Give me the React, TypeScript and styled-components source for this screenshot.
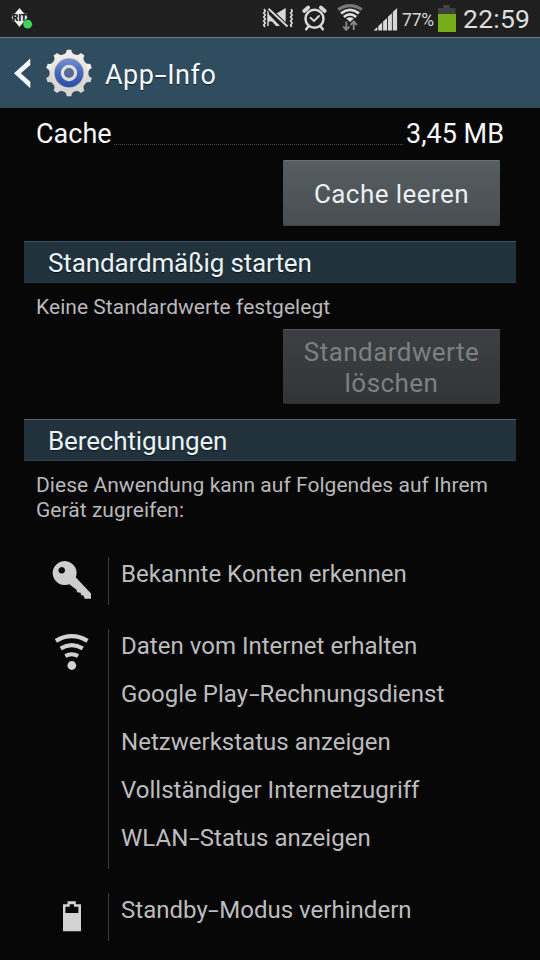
import React from "react";
import styled, { createGlobalStyle } from "styled-components";

const GlobalStyle = createGlobalStyle`
  * { box-sizing: border-box; }
  body { margin: 0; background: #070708; }
`;

const Screen = styled.main`
  width: 540px;
  height: 960px;
  overflow: hidden;
  display: flex;
  flex-direction: column;
  background: #070708;
  color: #f6f6f6;
  font-family: Roboto, "Liberation Sans", sans-serif;
`;

const StatusBar = styled.div`
  height: 37px;
  flex: none;
  display: flex;
  align-items: flex-start;
  justify-content: space-between;
  background: #1f1f1f;
`;

const StatusIcons = styled.div`
  display: flex;
  align-items: flex-start;
`;

const Percent = styled.span`
  width: 37px;
  padding-left: 1px;
  font-size: 17.5px;
  line-height: 40px;
  letter-spacing: -0.2px;
  color: #d6d6d6;
`;

const Clock = styled.span`
  width: 84px;
  padding-left: 7px;
  font-size: 26.5px;
  line-height: 38px;
  letter-spacing: 0.25px;
  color: #dedede;
`;

const ActionBar = styled.header`
  height: 71px;
  flex: none;
  display: flex;
  align-items: center;
  background: #304c5f;
  border-top: 1px solid #6b8292;
`;

const Title = styled.h1`
  margin: 4px 0 0 10px;
  font-size: 27px;
  font-weight: 400;
  letter-spacing: 0.5px;
  color: #f4fafc;
  text-shadow: 0 1px 1px #17252f;
`;

const CacheRow = styled.div`
  height: 52px;
  flex: none;
  display: flex;
  padding: 0 36px;
  font-size: 27px;
  line-height: 53px;
`;

const CacheLabel = styled.span`
  letter-spacing: 0;
`;

const Leader = styled.span`
  flex: 1;
  height: 37px;
  margin: 0 3px 0 2px;
  border-bottom: 1px dotted #4c4c4c;
`;

const Button = styled.button<{ $h: number }>`
  width: 217px;
  height: ${(p) => p.$h}px;
  flex: none;
  align-self: flex-end;
  margin-right: 40px;
  padding: 3px 0 0;
  border: 0;
  border-radius: 2px;
  font: 400 26px/31px Roboto, "Liberation Sans", sans-serif;
  letter-spacing: 0.45px;
  color: #eaf0f4;
  background: linear-gradient(#575e62, #484e51);
  box-shadow: inset 0 1px #6c7376, inset 0 -1px #3c4144;

  &:disabled {
    color: #7c8082;
    background: linear-gradient(#3c4042, #323537);
    box-shadow: inset 0 1px #535759, inset 0 -1px #2b2e30;
  }
`;

const SectionTitle = styled.h2<{ $line: string }>`
  width: 492px;
  height: 42px;
  flex: none;
  margin: 15px 0 0 24px;
  padding-left: 24px;
  font-size: 26px;
  font-weight: 400;
  line-height: 43px;
  letter-spacing: -0.13px;
  color: #ebf3f6;
  text-shadow: 0 1px 1px #0d161c;
  background: #22323d;
  border-top: 1px solid ${(p) => p.$line};
  border-bottom: 1px solid #293b47;
`;

const Note = styled.p<{ $h: number }>`
  height: ${(p) => p.$h}px;
  flex: none;
  margin: 0;
  padding: 12px 40px 0 36px;
  font-size: 21px;
  line-height: 24.5px;
  letter-spacing: 0.04px;
  color: #b9b9b9;
`;

const Permissions = styled.div`
  display: flex;
  flex-direction: column;
  gap: 24px;
`;

const Group = styled.section`
  display: grid;
  grid-template-columns: 108px 1fr;
`;

const GroupIcon = styled.div`
  display: flex;
  height: 48px;
  justify-content: flex-end;
  padding-right: 12px;
`;

const GroupItems = styled.ul`
  margin: 0;
  padding: 0 0 0 12px;
  list-style: none;
  border-left: 1px solid #3e3e3e;
`;

const Permission = styled.li`
  height: 48px;
  font-size: 24px;
  line-height: 34px;
  letter-spacing: 0.02px;
  color: #bdbdbd;
`;

const WideHyphen = styled.span`
  display: inline-block;
  margin: 0 0.1em;
  letter-spacing: 0;
  transform: scaleX(1.6);
`;

const Hyphenated = ({ text }: { text: string }) => (
  <>
    {text.split("-").map((part, i) => (
      <React.Fragment key={i}>
        {i > 0 && <WideHyphen>-</WideHyphen>}
        {part}
      </React.Fragment>
    ))}
  </>
);

const AppBadge = () => (
  <svg width="50" height="37" viewBox="0 0 50 37">
    <path d="M19.5 8 L27.5 17.5 L19.5 27 L11.5 17.5Z" fill="#f2f2f2" />
    <text x="19.7" y="21" textAnchor="middle" fontFamily="Roboto, sans-serif" fontSize="9" fontWeight="900" fill="#141414" stroke="#c9c9c9" strokeWidth="0.5" paintOrder="stroke">RIT</text>
    <circle cx="27.7" cy="24.2" r="4.4" fill="#3fd45a" />
  </svg>
);

const Muted = () => (
  <svg width="42" height="37" viewBox="0 0 42 37" fill="none" stroke="#d8d8d8">
    <path d="M13 9l1.3 2-1.6 2 1.6 2-1.6 2 1.6 2-1.6 2 1.6 2-1.6 2 1.3 2" strokeWidth="1.7" />
    <path d="M17 10.5v15.5" strokeWidth="1.5" />
    <path d="M17 13.5l12 12.5h-4l-4-4.5h-4z" fill="#d8d8d8" stroke="none" />
    <path d="M25 13.8L34.7 8v18L25 18z" fill="#d8d8d8" stroke="none" />
    <path d="M17 8.2L36 26.6" stroke="#1f1f1f" strokeWidth="4.5" />
    <path d="M17.5 8.7L36.5 26.5" strokeWidth="1.9" />
    <path d="M40.2 9l1 2-1.6 2 1.6 2-1.6 2 1.6 2-1.6 2 1.6 2-1.6 2 1 2" strokeWidth="1.7" />
  </svg>
);

const Alarm = () => (
  <svg width="43" height="37" viewBox="0 0 43 37" fill="none" stroke="#d8d8d8" strokeLinecap="round">
    <circle cx="21.5" cy="18.7" r="9" strokeWidth="2.5" />
    <path d="M11.2 11L15.2 7.5M27.8 7.5l4 3.5" strokeWidth="3.7" />
    <path d="M15.5 26.3l-2.3 3M27.5 26.3l2.3 3" strokeWidth="2.5" />
    <path d="M17.5 17.7l3.5 3.3 5-5" strokeWidth="1.9" />
  </svg>
);

const StatusWifi = () => (
  <svg width="37" height="37" viewBox="0 0 37 37" fill="none">
    <path d="M2.2 9.7Q14 1.5 25.8 9.7" stroke="#777" strokeWidth="3.3" />
    <path d="M5 13.3Q14 6.5 23 13.3" stroke="#dedede" strokeWidth="2.8" />
    <path d="M7.8 16.9Q14 12 20.2 16.9" stroke="#dedede" strokeWidth="2.6" />
    <path d="M10.2 18.6Q14 15.8 17.8 18.6L14 22z" fill="#dedede" />
    <path d="M10.3 21.5v8M7.2 26.5l3.1 3.3 3.1-3.3M17.7 30v-8M14.5 25l3.2-3.5 3.2 3.5" stroke="#868686" strokeWidth="1.9" />
  </svg>
);

const Signal = () => (
  <svg width="28" height="37" viewBox="0 0 28 37" fill="#d8d8d8">
    <path d="M0.5 30.5L4.4 27v3.5zM5.3 30.5V26L9.2 22.5v8zM10.1 30.5V21.5l3.9-3.5v12.5zM14.9 30.5V16.7l4-3.5v17.3zM19.8 30.5V12l4.3-4v22.5z" />
  </svg>
);

const StatusBattery = () => (
  <svg width="18" height="37" viewBox="0 0 18 37">
    <path d="M5.5 5h6v3h6v6h-18V8h6z" fill="#3f4040" />
    <path d="M5.5 5h6v2.5h-6z" fill="#4a403d" />
    <path d="M0 14h18v18H0z" fill="#76ad18" />
  </svg>
);

const BackArrow = () => (
  <svg width="43" height="70" viewBox="0 0 43 70">
    <path d="M30.3 20.5v6.6L20.8 35.2l9.5 8.5v6.6L14 35.2z" fill="#f5fafc" />
  </svg>
);

const Gear = () => (
  <svg width="52" height="52" viewBox="-26 -26 52 52">
    <defs>
      <linearGradient id="gearBlue" x1="0" y1="0" x2="0" y2="1">
        <stop offset="0" stopColor="#7590d4" />
        <stop offset="0.5" stopColor="#4568b9" />
        <stop offset="1" stopColor="#294ca8" />
      </linearGradient>
      <linearGradient id="gearBody" x1="0" y1="0" x2="0" y2="1">
        <stop offset="0" stopColor="#f1eeeb" />
        <stop offset="1" stopColor="#d4d1d0" />
      </linearGradient>
    </defs>
    <circle r="19.5" fill="url(#gearBody)" />
    {Array.from({ length: 10 }, (_, i) => (
      <path key={i} d="M-4.8-18.5l2-2.3.5-2.4h4.6l.5 2.4 2 2.3z" fill={i > 2 && i < 8 ? "#d9d6d4" : "#f0edea"} transform={`rotate(${i * 36})`} />
    ))}
    <circle r="15" fill="#bcb8b7" />
    <circle r="14.3" fill="url(#gearBlue)" />
    <circle r="6.6" fill="#566b92" stroke="#e0ddda" strokeWidth="3.2" />
  </svg>
);

const KeyIcon = () => (
  <svg width="48" height="48" viewBox="48 557 48 48">
    <path fillRule="evenodd" fill="#cecece" d="M64.7 561a12 12 0 1 1-.1 0zM61.7 567a3.3 3.3 0 1 0 .1 0z" />
    <path fill="#cecece" d="M69 584l6-7.5L91 593.5v5.3h-6.3l-1.2-3.3-2.2-.3-.8-2.5-3.4-.4-.6-2.5z" />
  </svg>
);

const WifiIcon = () => (
  <svg width="48" height="48" viewBox="48 629 48 48" fill="none" stroke="#d2d2d2">
    <path d="M55.9 640.8Q71.7 631.5 87.5 640.8" strokeWidth="4.4" />
    <path d="M60.7 648.5Q71.7 641.8 82.7 648.5" strokeWidth="4.2" />
    <path d="M65.3 656Q71.7 652.4 78.1 656" strokeWidth="4" />
    <circle cx="71.8" cy="665.5" r="4.4" fill="#d2d2d2" stroke="none" />
  </svg>
);

const BatteryIcon = () => (
  <svg width="48" height="48" viewBox="48 893 48 48">
    <path fillRule="evenodd" fill="#d2d2d2" d="M67.5 901.3h8.3v3H81v27H63v-27h4.5zM69.7 904.2v2.5h-4.3v6.4h13v-6.4H74v-2.5z" />
  </svg>
);

const groups = [
  { icon: <KeyIcon />, items: ["Bekannte Konten erkennen"] },
  {
    icon: <WifiIcon />,
    items: [
      "Daten vom Internet erhalten",
      "Google Play-Rechnungsdienst",
      "Netzwerkstatus anzeigen",
      "Vollständiger Internetzugriff",
      "WLAN-Status anzeigen",
    ],
  },
  { icon: <BatteryIcon />, items: ["Standby-Modus verhindern"] },
];

export default function App() {
  return (
    <Screen>
      <GlobalStyle />
      <StatusBar>
        <AppBadge />
        <StatusIcons>
          <Muted />
          <Alarm />
          <StatusWifi />
          <Signal />
          <Percent>77%</Percent>
          <StatusBattery />
          <Clock>22:59</Clock>
        </StatusIcons>
      </StatusBar>
      <ActionBar>
        <BackArrow />
        <Gear />
        <Title>
          <Hyphenated text="App-Info" />
        </Title>
      </ActionBar>
      <CacheRow>
        <CacheLabel>Cache</CacheLabel>
        <Leader />
        <CacheLabel>3,45 MB</CacheLabel>
      </CacheRow>
      <Button $h={66}>Cache leeren</Button>
      <SectionTitle $line="#38556a">Standardmäßig starten</SectionTitle>
      <Note $h={46}>Keine Standardwerte festgelegt</Note>
      <Button $h={75} disabled>
        Standardwerte
        <br />
        löschen
      </Button>
      <SectionTitle $line="#59646c">Berechtigungen</SectionTitle>
      <Note $h={96}>
        Diese Anwendung kann auf Folgendes auf Ihrem
        <br />
        Gerät zugreifen:
      </Note>
      <Permissions>
        {groups.map((group, i) => (
          <Group key={i}>
            <GroupIcon>{group.icon}</GroupIcon>
            <GroupItems>
              {group.items.map((name) => (
                <Permission key={name}>
                  <Hyphenated text={name} />
                </Permission>
              ))}
            </GroupItems>
          </Group>
        ))}
      </Permissions>
    </Screen>
  );
}
